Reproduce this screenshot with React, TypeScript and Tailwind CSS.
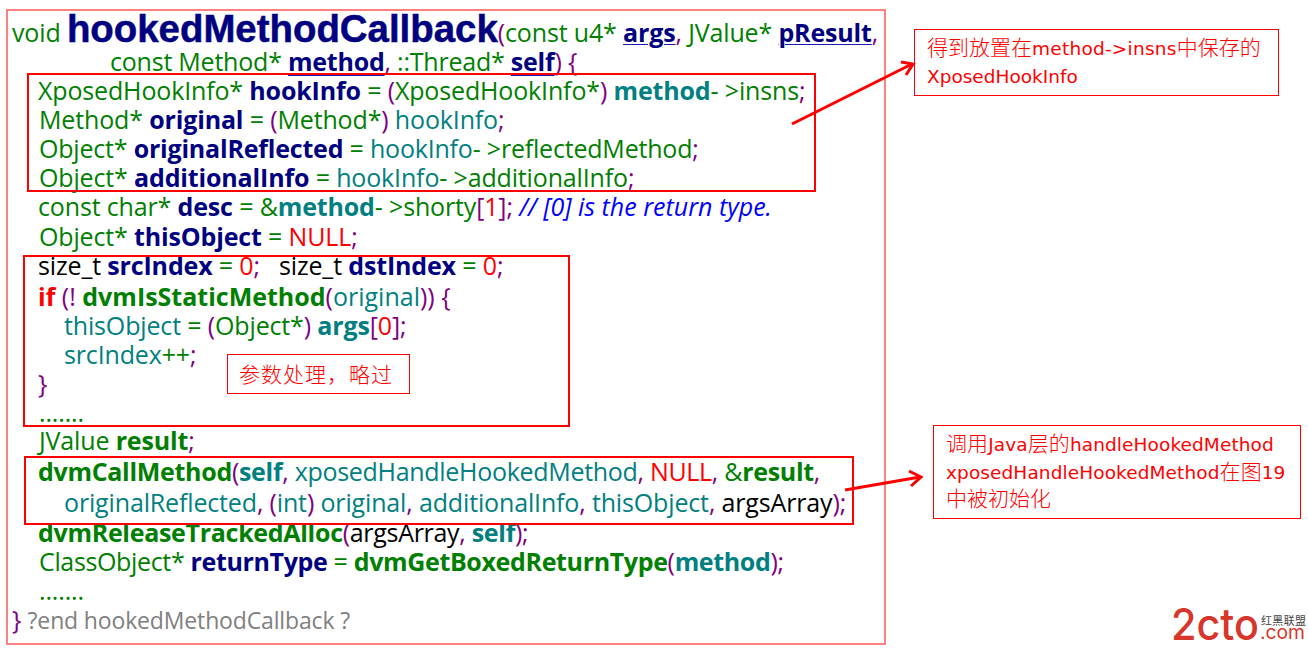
import React from "react";

const G = ({ children }: { children: React.ReactNode }) => <span className="text-[#008000]">{children}</span>;
const N = ({ children }: { children: React.ReactNode }) => <b className="font-bold text-[#000080]">{children}</b>;
const U = ({ children }: { children: React.ReactNode }) => (
    <b className="font-bold text-[#000080] underline decoration-[#1a1ab0] decoration-1 underline-offset-[2px]">{children}</b>
);
const U2 = ({ children }: { children: React.ReactNode }) => (
    <b className="font-bold text-[#000080] underline decoration-[#1a1ab0] decoration-1 underline-offset-[4px]">{children}</b>
);
const T = ({ children }: { children: React.ReactNode }) => <span className="text-[#008080]">{children}</span>;
const TB = ({ children }: { children: React.ReactNode }) => <b className="font-bold text-[#008080]">{children}</b>;
const GB = ({ children }: { children: React.ReactNode }) => <b className="font-bold text-[#008000]">{children}</b>;
const P = ({ children }: { children: React.ReactNode }) => <span className="text-[#800080]">{children}</span>;
const R = ({ children }: { children: React.ReactNode }) => <span className="text-[#ff0000]">{children}</span>;
const K = ({ children }: { children: React.ReactNode }) => <span className="text-black">{children}</span>;

const Row = ({ className, children }: { className: string; children: React.ReactNode }) => (
    <div className={`h-[29px] leading-[29px] whitespace-pre ${className}`}>{children}</div>
);

const Cjk = ({ children }: { children: React.ReactNode }) => (
    <span className="text-[21px] leading-none font-['Noto_Sans_CJK_SC',sans-serif] font-light">{children}</span>
);

const CodeBlock = () => (
    <div className="w-[880px] h-[636px] border-2 border-[#ff8080] text-[25px] font-['Open_Sans','Noto_Sans',sans-serif] tracking-[-0.15px]">
        <div className="h-[35px] pl-1 leading-[35px] whitespace-pre">
            <G>void </G>
            <b className="font-['Liberation_Sans',sans-serif] text-[38.4px] font-bold tracking-normal text-[#000080] [-webkit-text-stroke:0.5px_#000080]">hookedMethodCallback</b>
            <P>(</P><G>const u4* </G><U>args</U><P>,</P><G> JValue* </G><U>pResult</U><P>,</P>
        </div>
        <Row className="pl-[102px] mt-[1px] tracking-[-0.22px]">
            <G>const Method* </G><U2>method</U2><P>,</P><G> ::Thread* </G><U2>self</U2><P>) {"{"}</P>
        </Row>
        <Row className="pl-[30px]">
            <G>XposedHookInfo* </G><N>hookInfo</N><G> = </G><P>(</P><G>XposedHookInfo*</G><P>)</P> <TB>method</TB><G>- &gt;insns</G><P>;</P>
        </Row>
        <Row className="pl-[31px]">
            <G>Method* </G><N>original</N><G> = </G><P>(</P><G>Method*</G><P>)</P> <T>hookInfo</T><P>;</P>
        </Row>
        <Row className="pl-[31px] tracking-[-0.2px]">
            <G>Object* </G><N>originalReflected</N><G> = </G><T>hookInfo</T><G>- &gt;reflectedMethod</G><P>;</P>
        </Row>
        <Row className="pl-[31px]">
            <G>Object* </G><N>additionalInfo</N><G> = </G><T>hookInfo</T><G>- &gt;additionalInfo</G><P>;</P>
        </Row>
        <Row className="pl-[30px]">
            <G>const char* </G><N>desc</N><G> = &amp;</G><TB>method</TB><G>- &gt;shorty</G><P>[</P><R>1</R><P>];</P>{" "}
            <i className="text-[#0000ff] tracking-[0px]">// [0] is the return type.</i>
        </Row>
        <Row className="pl-[31px] mt-[1px]">
            <G>Object* </G><N>thisObject</N><G> = </G><R>NULL</R><P>;</P>
        </Row>
        <Row className="pl-[30px]">
            <K>size_t </K><N>srcIndex</N><G> = </G><R>0</R><P>;</P>{"   "}<K>size_t </K><N>dstIndex</N><G> = </G><R>0</R><P>;</P>
        </Row>
        <Row className="pl-[30px] mt-[2px] tracking-[0px]">
            <b className="font-bold text-[#ff0000]">if</b> <P>(!</P> <GB>dvmIsStaticMethod</GB><P>(</P><T>original</T><P>)) {"{"}</P>
        </Row>
        <Row className="pl-[56px]">
            <T>thisObject</T><G> = </G><P>(</P><G>Object*</G><P>)</P> <TB>args</TB><P>[</P><R>0</R><P>];</P>
        </Row>
        <Row className="pl-[56px]">
            <T>srcIndex</T><G>++</G><P>;</P>
        </Row>
        <Row className="pl-[30px]">
            <P>{"}"}</P>
        </Row>
        <Row className="pl-[31px]">
            <G>.......</G>
        </Row>
        <Row className="pl-[31px] -mt-[1px]">
            <G>JValue </G><GB>result</GB><P>;</P>
        </Row>
        <Row className="pl-[30px] mt-[2px] tracking-[-0.3px]">
            <GB>dvmCallMethod</GB><P>(</P><TB>self</TB><P>,</P> <T>xposedHandleHookedMethod</T><P>,</P> <R>NULL</R><P>,</P> <G>&amp;</G><GB>result</GB><P>,</P>
        </Row>
        <Row className="pl-[56px] mt-[2px]">
            <T>originalReflected</T><P>, (</P><T>int</T><P>)</P> <T>original</T><P>,</P> <T>additionalInfo</T><P>,</P> <T>thisObject</T><P>,</P> <K>argsArray</K><P>);</P>
        </Row>
        <Row className="pl-[30px] mt-[1px] tracking-[-0.3px]">
            <GB>dvmReleaseTrackedAlloc</GB><P>(</P><K>argsArray</K><P>,</P> <TB>self</TB><P>);</P>
        </Row>
        <Row className="pl-[31px] tracking-[-0.35px]">
            <G>ClassObject* </G><N>returnType</N><G> = </G><GB>dvmGetBoxedReturnType</GB><P>(</P><TB>method</TB><P>);</P>
        </Row>
        <Row className="pl-[31px]">
            <G>.......</G>
        </Row>
        <Row className="pl-1">
            <P>{"}"}</P> <span className="text-[#808080] text-[23px]">?end hookedMethodCallback ?</span>
        </Row>
    </div>
);

const Logo = () => (
    <svg className="absolute left-[1170px] top-[604px]" width="138" height="47" viewBox="0 0 138 47">
        <text x="1" y="36" fontFamily="Inter, sans-serif" fontSize="44" fontWeight="500" fill="#d8352b" textLength="88" lengthAdjust="spacingAndGlyphs">2cto</text>
        <text x="91" y="21" fontFamily="'Noto Sans CJK SC', sans-serif" fontSize="11" fill="#444444" textLength="45">红黑联盟</text>
        <text x="90" y="35" fontFamily="Inter, sans-serif" fontSize="20" fill="#d8352b" textLength="45" lengthAdjust="spacingAndGlyphs">.com</text>
    </svg>
);

const App: React.FC = () => {
    return (
        <div className="relative w-[1308px] h-[651px] bg-white overflow-hidden pl-[6px] pt-[9px]">
            <CodeBlock />

            <div className="absolute left-[27px] top-[73px] w-[789px] h-[119px] border-[2px] border-[#ff0000]" />
            <div className="absolute left-[23px] top-[255px] w-[547px] h-[172px] border-[2px] border-[#ff0000]" />
            <div className="absolute left-[24px] top-[456px] w-[830px] h-[69px] border-[2px] border-[#ff0000]" />

            <div className="absolute left-[227px] top-[354px] w-[183px] h-[40px] border border-[#ff0000] bg-white flex items-center pl-[11px] text-[#ff0000] text-[21px] tracking-[1px] font-['Noto_Sans_CJK_SC',sans-serif] font-light">
                参数处理，略过
            </div>

            <div className="absolute left-[914px] top-[29px] w-[365px] h-[67px] border border-[#ff0000] pl-[12px] pt-[5px] text-[#ff0000] text-[18.5px] font-['DejaVu_Sans',sans-serif] whitespace-pre">
                <div className="h-[28px] leading-[28px]"><Cjk>得到放置在</Cjk><span className="tracking-[0.25px]">method-&gt;insns</span><Cjk>中保存的</Cjk></div>
                <div className="h-[27px] leading-[27px]">XposedHookInfo</div>
            </div>

            <div className="absolute left-[933px] top-[425px] w-[368px] h-[94px] border border-[#ff0000] pl-[12px] pt-[5px] text-[#ff0000] text-[18.5px] font-['DejaVu_Sans',sans-serif] whitespace-pre">
                <div className="h-[28px] leading-[28px] tracking-[0.1px]"><Cjk>调用</Cjk>Java<Cjk>层的</Cjk>handleHookedMethod</div>
                <div className="h-[27px] leading-[27px] tracking-[0.1px]">xposedHandleHookedMethod<Cjk>在图</Cjk>19</div>
                <div className="h-[27px] leading-[27px]"><Cjk>中被初始化</Cjk></div>
            </div>

            {/* arrows */}
            <svg className="absolute left-0 top-0" width="1308" height="651" viewBox="0 0 1308 651" fill="none">
                <g stroke="#ff0000" strokeWidth="3">
                    <path d="M792 124 L912 64" />
                    <path d="M901 62 L913 64 L906 75" />
                    <path d="M845 490 L920 477" />
                    <path d="M909 471 L921 477 L911 486" />
                </g>
            </svg>

            <Logo />
        </div>
    );
};

export default App;
